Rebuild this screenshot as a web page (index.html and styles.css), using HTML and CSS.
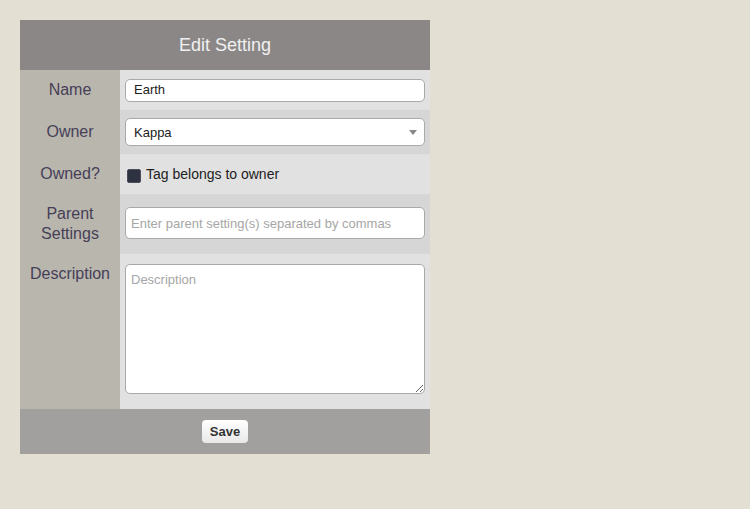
FILE: index.html
```html
<!DOCTYPE html>
<html>
<head>
<meta charset="utf-8">
<title>Edit Setting</title>
<link rel="stylesheet" href="styles.css">
</head>
<body>
<form class="panel">
  <div class="header">Edit Setting</div>
  <div class="row light">
    <div class="label">Name</div>
    <div class="value"><input class="field name" type="text" value="Earth"></div>
  </div>
  <div class="row dark">
    <div class="label">Owner</div>
    <div class="value">
      <div class="select-wrap">
        <select class="field owner"><option>Kappa</option></select>
      </div>
    </div>
  </div>
  <div class="row light">
    <div class="label">Owned?</div>
    <div class="value">
      <label class="check"><input type="checkbox" class="box" checked><span>Tag belongs to owner</span></label>
    </div>
  </div>
  <div class="row dark">
    <div class="label">Parent<br>Settings</div>
    <div class="value"><input class="field parent" type="text" placeholder="Enter parent setting(s) separated by commas"></div>
  </div>
  <div class="row light desc-row">
    <div class="label">Description</div>
    <div class="value"><textarea class="field desc" placeholder="Description"></textarea></div>
  </div>
  <div class="footer"><button type="button" class="save">Save</button></div>
</form>
</body>
</html>
```

FILE: styles.css
```css
* { box-sizing: border-box; }
html, body { margin: 0; }
body {
  background: #e4dfd3;
  padding: 20px;
  font-family: "Liberation Sans", Arial, sans-serif;
}
.panel {
  width: 410px;
  margin: 0;
}
.header {
  height: 50px;
  background: #8b8787;
  color: #f0f0f0;
  font-size: 18px;
  display: flex;
  align-items: center;
  justify-content: center;
}
.row {
  display: flex;
}
.row.light .value { background: #e1e1e1; }
.row.dark .value { background: #d6d6d6; }
.label {
  width: 100px;
  flex-shrink: 0;
  background: #b9b6ae;
  color: #464057;
  font-size: 16px;
  line-height: 20px;
  padding: 10px 0;
  text-align: center;
  display: flex;
  align-items: center;
  justify-content: center;
}
.desc-row .label {
  align-items: flex-start;
}
.value {
  flex: 1;
  padding: 8px 5px;
  display: flex;
  align-items: center;
}
.desc-row .value {
  align-items: flex-start;
  padding: 10px 5px 15px;
}
.field {
  width: 300px;
  border: 1px solid #a9a9a9;
  border-radius: 5px;
  background: #fff;
  font-family: "Liberation Sans", Arial, sans-serif;
  font-size: 13px;
  color: #222;
  margin: 0;
  outline: none;
}
.field::placeholder { color: #a6a6a6; }
.name {
  height: 23px;
  padding: 0 8px 1px;
}
.select-wrap {
  position: relative;
  width: 300px;
}
.owner {
  display: block;
  height: 28px;
  padding: 0 8px;
  appearance: none;
  -webkit-appearance: none;
}
.select-wrap::after {
  content: "";
  position: absolute;
  right: 8px;
  top: 12px;
  border-left: 4px solid transparent;
  border-right: 4px solid transparent;
  border-top: 5px solid #888;
}
.parent {
  height: 32px;
  padding: 0 5px;
  margin-bottom: 2px;
}
.desc {
  display: block;
  height: 130px;
  padding: 7px 5px;
  resize: vertical;
}
.check {
  display: flex;
  align-items: center;
  font-size: 14px;
  color: #222;
  line-height: 20px;
}
.box {
  appearance: none;
  -webkit-appearance: none;
  width: 14px;
  height: 14px;
  margin: 4px 5px 0 2px;
  background: #2f3241;
  border: 1px solid #4a4d59;
  border-radius: 2px;
}
.footer {
  height: 45px;
  background: #a2a09e;
  display: flex;
  align-items: center;
  justify-content: center;
}
.save {
  width: 46px;
  height: 23px;
  border: none;
  border-radius: 4px;
  background: linear-gradient(#ffffff, #e8e8e8);
  font-family: "Liberation Sans", Arial, sans-serif;
  font-weight: bold;
  font-size: 13px;
  color: #333;
  padding: 0;
}
```
